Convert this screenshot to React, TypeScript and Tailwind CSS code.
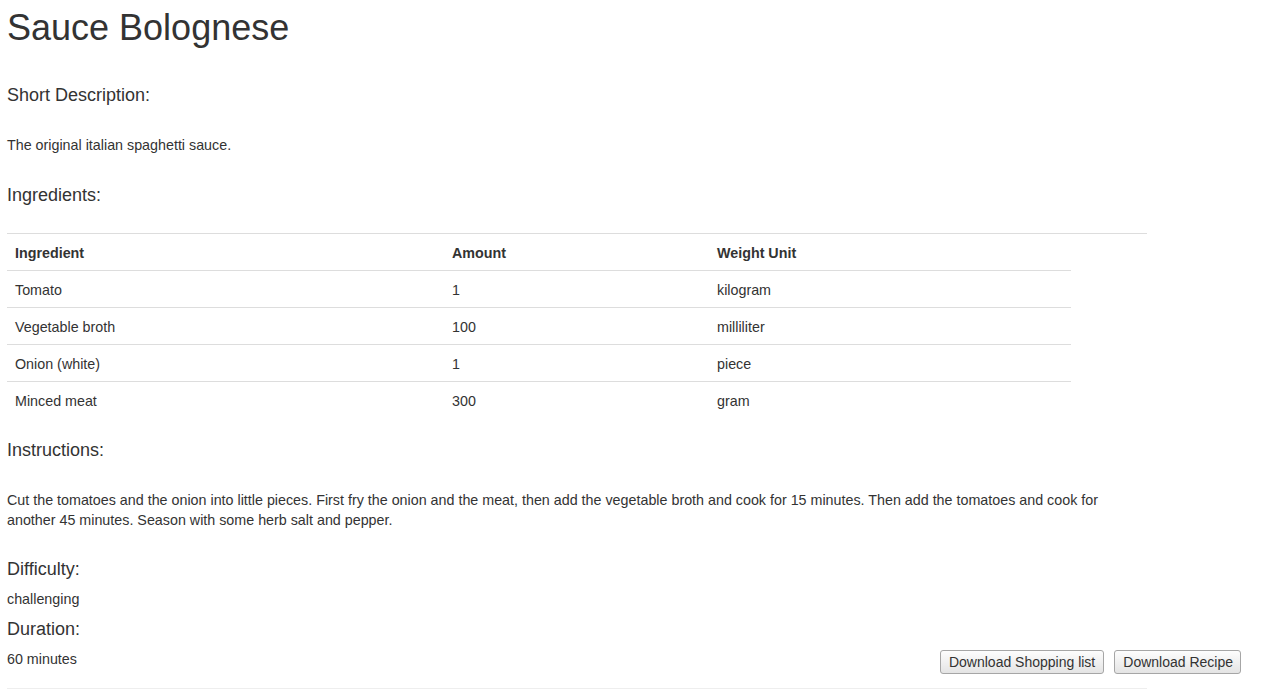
const ingredients = [
  { name: "Tomato", amount: "1", unit: "kilogram" },
  { name: "Vegetable broth", amount: "100", unit: "milliliter" },
  { name: "Onion (white)", amount: "1", unit: "piece" },
  { name: "Minced meat", amount: "300", unit: "gram" },
];

const font = { fontFamily: '"Liberation Sans", Arial, sans-serif' };

function Heading({ children, className = "" }: { children: React.ReactNode; className?: string }) {
  return <h4 className={`text-[18px] leading-5 font-normal ${className}`}>{children}</h4>;
}

export default function App() {
  return (
    <div className="min-h-screen bg-white text-[#333] text-[14.3px] leading-5" style={font}>
      <div className="flex flex-col pl-[7px]">
        <h1 className="mt-2 text-[36px] leading-10 font-normal">Sauce Bolognese</h1>

        <Heading className="mt-[37px]">Short Description:</Heading>
        <p className="mt-[30px]">The original italian spaghetti sauce.</p>

        <Heading className="mt-[30px]">Ingredients:</Heading>
        <div className="mt-[28px] w-[1140px] border-t border-[#ddd]" />

        <table className="w-[1064px] table-fixed border-collapse">
          <colgroup>
            <col className="w-[437px]" />
            <col className="w-[265px]" />
            <col className="w-[362px]" />
          </colgroup>
          <thead>
            <tr>
              <th className="px-2 pt-[9px] pb-[7px] h-9 text-left font-bold">Ingredient</th>
              <th className="px-2 pt-[9px] pb-[7px] h-9 text-left font-bold">Amount</th>
              <th className="px-2 pt-[9px] pb-[7px] h-9 text-left font-bold">Weight Unit</th>
            </tr>
          </thead>
          <tbody>
            {ingredients.map((row) => (
              <tr key={row.name} className="border-t border-[#ddd]">
                <td className="px-2 pt-[9px] pb-[7px] h-9">{row.name}</td>
                <td className="px-2 pt-[9px] pb-[7px] h-9">{row.amount}</td>
                <td className="px-2 pt-[9px] pb-[7px] h-9">{row.unit}</td>
              </tr>
            ))}
          </tbody>
        </table>

        <Heading className="mt-[22px]">Instructions:</Heading>
        <p className="mt-[30px] w-[1140px]">
          Cut the tomatoes and the onion into little pieces. First fry the onion and the meat, then add the
          vegetable broth and cook for 15 minutes. Then add the tomatoes and cook for another 45 minutes. Season
          with some herb salt and pepper.
        </p>

        <Heading className="mt-[29px]">Difficulty:</Heading>
        <p className="mt-[10px]">challenging</p>
        <Heading className="mt-[10px]">Duration:</Heading>

        <div className="mt-[10px] flex w-[1234px] items-start justify-between">
          <p>60 minutes</p>
          <div className="mt-[1px] flex gap-[10px]">
            <button className="rounded-[3px] border border-[#a6a6a6] bg-gradient-to-b from-[#fdfdfd] to-[#e4e4e4] px-2 py-[2px] text-[14px] leading-[18px] text-[#333]">
              Download Shopping list
            </button>
            <button className="rounded-[3px] border border-[#a6a6a6] bg-gradient-to-b from-[#fdfdfd] to-[#e4e4e4] pl-2 pr-[7px] py-[2px] text-[14px] leading-[18px] text-[#333]">
              Download Recipe
            </button>
          </div>
        </div>

        <div className="mt-[14px] w-[1140px] border-t border-[#eee]" />
      </div>
    </div>
  );
}
